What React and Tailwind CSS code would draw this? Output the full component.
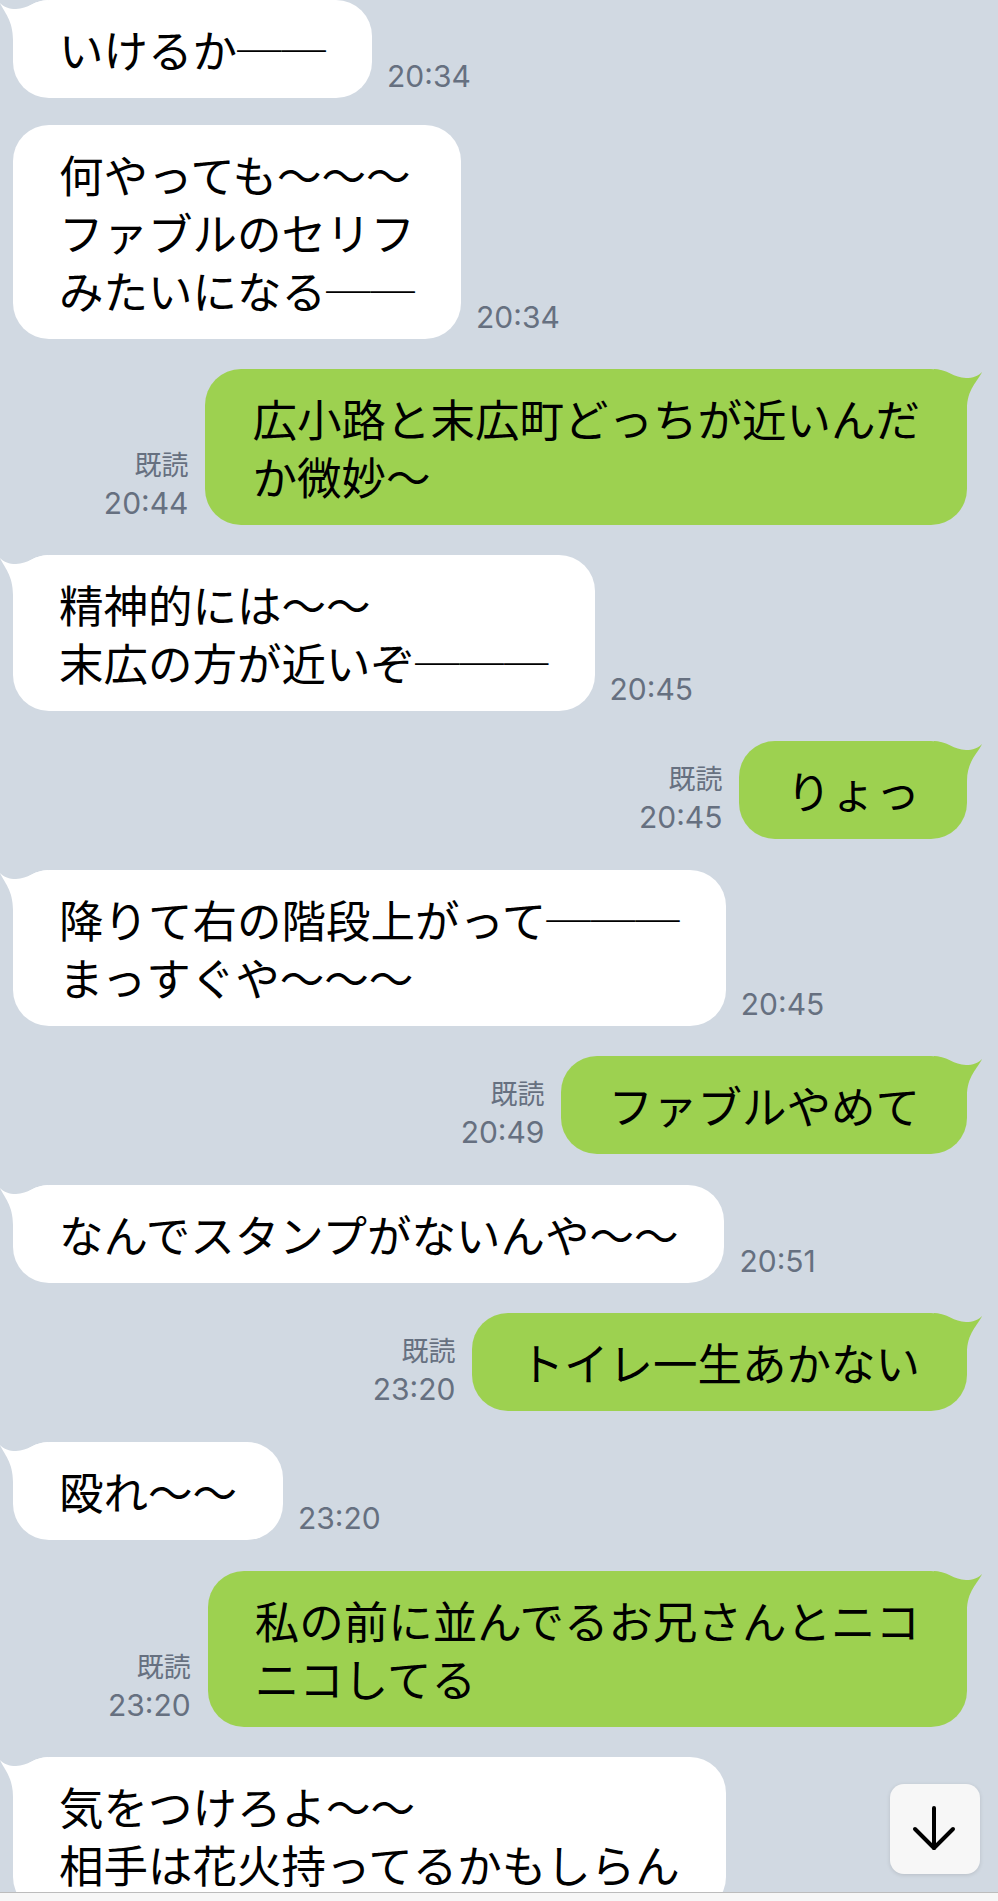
import React from "react";

const MSG = "font-['Noto_Sans_CJK_JP',sans-serif]";
const META = "font-['Inter','Noto_Sans_CJK_JP',sans-serif] text-[#667080]";

function WhiteTail() {
  return (
    <svg className="absolute left-[-13px] top-0" width="50" height="40" viewBox="0 0 50 40">
      <path d="M48 0 C35 0 28 9 16 9 C9 9 4 7 0 3 C4 12 13 20 13 40 L48 40 Z" fill="#ffffff" />
    </svg>
  );
}

function GreenTail() {
  return (
    <svg className="absolute right-[-15px] top-0" width="52" height="40" viewBox="0 0 52 40">
      <path d="M4 0 C17 0 24 9 36 9 C43 9 48 7 52 3 C48 12 37 20 37 40 L4 40 Z" fill="#9dd150" />
    </svg>
  );
}

function Lines({ lines }) {
  return lines.map((l, i) => (
    <React.Fragment key={i}>
      {i > 0 && <br />}
      {l}
    </React.Fragment>
  ));
}

function Incoming({ lines, time, tail = true, mt }) {
  return (
    <div className={`flex items-end pl-[13px] ${mt}`}>
      <div className={`relative rounded-[36px] bg-white px-[46px] py-[20px] text-[44.5px] leading-[58px] text-black whitespace-nowrap ${MSG}`}>
        {tail && <WhiteTail />}
        <span className="relative">
          <Lines lines={lines} />
        </span>
      </div>
      {time && (
        <span className={`ml-[15px] pb-[4px] text-[30px] leading-[36px] ${META}`}>{time}</span>
      )}
    </div>
  );
}

function Outgoing({ lines, time, mt }) {
  return (
    <div className={`flex items-end justify-end pr-[31px] ${mt}`}>
      <div className="mr-[17px] flex flex-col items-end pb-[4px]">
        <span className={`text-[27px] leading-[32px] ${META}`}>既読</span>
        <span className={`mt-[3px] text-[30px] leading-[36px] ${META}`}>{time}</span>
      </div>
      <div className={`relative rounded-[36px] bg-[#9dd150] px-[47px] py-[20px] text-[44.5px] leading-[58px] text-black whitespace-nowrap ${MSG}`}>
        <GreenTail />
        <span className="relative">
          <Lines lines={lines} />
        </span>
      </div>
    </div>
  );
}

export default function App() {
  return (
    <div className="relative flex h-[1901px] w-[998px] flex-col overflow-hidden bg-[#d1d9e2]">
      <div className="flex-1 overflow-hidden">
        <Incoming lines={["いけるか──"]} time="20:34" mt="mt-0" />
        <Incoming
          lines={["何やっても～～～", "ファブルのセリフ", "みたいになる──"]}
          time="20:34"
          tail={false}
          mt="mt-[27px]"
        />
        <Outgoing lines={["広小路と末広町どっちが近いんだ", "か微妙～"]} time="20:44" mt="mt-[30px]" />
        <Incoming lines={["精神的には～～", "末広の方が近いぞ───"]} time="20:45" mt="mt-[30px]" />
        <Outgoing lines={["りょっ"]} time="20:45" mt="mt-[30px]" />
        <Incoming lines={["降りて右の階段上がって───", "まっすぐや～～～"]} time="20:45" mt="mt-[31px]" />
        <Outgoing lines={["ファブルやめて"]} time="20:49" mt="mt-[30px]" />
        <Incoming lines={["なんでスタンプがないんや～～"]} time="20:51" mt="mt-[31px]" />
        <Outgoing lines={["トイレ一生あかない"]} time="23:20" mt="mt-[30px]" />
        <Incoming lines={["殴れ～～"]} time="23:20" mt="mt-[31px]" />
        <Outgoing lines={["私の前に並んでるお兄さんとニコ", "ニコしてる"]} time="23:20" mt="mt-[31px]" />
        <Incoming lines={["気をつけろよ～～", "相手は花火持ってるかもしらん"]} mt="mt-[30px]" />
      </div>
      <div className="h-[9px] shrink-0 border-t border-[#bcbcbc] bg-[#f7f7f7]" />
      <button
        type="button"
        className="absolute bottom-[27px] right-[18px] flex h-[90px] w-[90px] items-center justify-center rounded-[14px] bg-[#f7f7f7] shadow-[0_1px_4px_rgba(0,0,0,0.12)]"
      >
        <svg width="90" height="90" viewBox="0 0 90 90" fill="none" stroke="#000" strokeWidth="4" strokeLinecap="round" strokeLinejoin="round">
          <path d="M44 24 L44 64" />
          <path d="M25 45 L44 64 L63 45" />
        </svg>
      </button>
    </div>
  );
}
